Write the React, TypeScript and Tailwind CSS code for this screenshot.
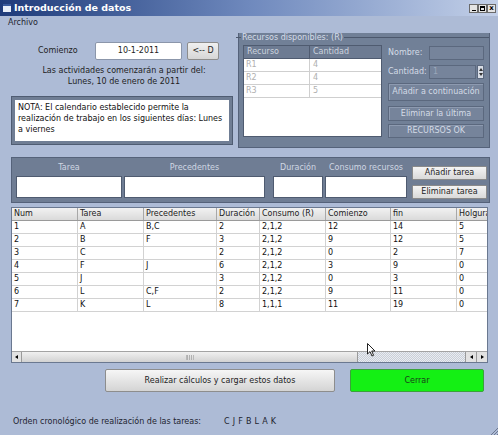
const rows = [
  ['1', 'A', 'B,C', '2', '2,1,2', '12', '14', '5'],
  ['2', 'B', 'F', '3', '2,1,2', '9', '12', '5'],
  ['3', 'C', '', '2', '2,1,2', '0', '2', '7'],
  ['4', 'F', 'J', '6', '2,1,2', '3', '9', '0'],
  ['5', 'J', '', '3', '2,1,2', '0', '3', '0'],
  ['6', 'L', 'C,F', '2', '2,1,2', '9', '11', '0'],
  ['7', 'K', 'L', '8', '1,1,1', '11', '19', '0'],
]

const headers = ['Num', 'Tarea', 'Precedentes', 'Duración', 'Consumo (R)', 'Comienzo', 'fin', 'Holgura']
const colW = ['w-[66px]', 'w-[66px]', 'w-[73px]', 'w-[43px]', 'w-[66px]', 'w-[65px]', 'w-[66px]', 'w-[40px]']

const resources = [
  ['R1', '4'],
  ['R2', '4'],
  ['R3', '5'],
]

function WinButton({ children }: { children: React.ReactNode }) {
  return (
    <div className="w-[9px] h-[9px] bg-[#e4e4e4] border border-[#6a6a6a] flex items-center justify-center text-[7px] leading-none text-black font-bold">
      {children}
    </div>
  )
}

function DarkButton({ label, className = '' }: { label: string; className?: string }) {
  return (
    <div
      className={`w-[96px] flex items-center justify-center bg-[#76849b] border border-[#5b687e] shadow-[inset_1px_1px_0_#8d9ab0] text-[#d4dbe6] ${className}`}
    >
      {label}
    </div>
  )
}

export default function App() {
  return (
    <div
      className="w-[498px] h-[435px] bg-[#adbbd6] overflow-hidden relative text-[8px] text-[#1e1e1e]"
      style={{ fontFamily: '"DejaVu Sans", Verdana, sans-serif' }}
    >
      {/* title bar */}
      <div className="h-[16px] flex items-center bg-gradient-to-r from-[#1f3b7a] via-[#6f89bd] to-[#c3d0e8]">
        <div className="ml-[3px] w-[8px] h-[8px] bg-[#e8eef8] border-t-[2px] border-[#3a5a9c]" />
        <span className="ml-[3px] text-white font-bold text-[9.5px] leading-none">Introducción de datos</span>
        <div className="ml-auto mr-[2px] flex">
          <WinButton>
            <span className="block w-[4px] h-[1px] bg-black mt-[4px]" />
          </WinButton>
          <WinButton>
            <span className="block w-[5px] h-[5px] border border-black border-t-2" />
          </WinButton>
          <WinButton>x</WinButton>
        </div>
      </div>

      {/* menu */}
      <div className="h-[14px] pl-[8px] flex items-center text-[#1e2430]">Archivo</div>

      {/* top section */}
      <div className="flex pl-[11px] pt-[3px]">
        <div className="w-[222px]">
          <div className="mt-[9px] h-[18px] flex items-center">
            <span className="ml-[27px] w-[57px]">Comienzo</span>
            <div className="w-[87px] h-[18px] bg-white border border-[#8b96aa] rounded-[2px] flex items-center justify-center">
              10-1-2011
            </div>
            <div className="ml-[5px] w-[32px] h-[18px] bg-gradient-to-b from-[#f0f0f0] to-[#d6d6d6] border border-[#8d8d8d] rounded-[2px] flex items-center justify-center">
              &lt;-- D
            </div>
          </div>
          <div className="mt-[5px] text-center leading-[11px] pl-[4px]">
            <div>Las actividades comenzarán a partir del:</div>
            <div>Lunes, 10 de enero de 2011</div>
          </div>
          <div className="mt-[9px] h-[49px] bg-[#6f7d94] border border-[#4f5c72] p-[3px]">
            <div className="h-full bg-white px-[3px] pt-[2px] leading-[11px] text-[#111]">
              NOTA: El calendario establecido permite la realización de trabajo en los siguientes días: Lunes a viernes
            </div>
          </div>
        </div>

        {/* recursos group */}
        <div className="ml-[5px] w-[252px] h-[115px] bg-[#718097] border-x border-b border-[#55627a] relative">
          <div className="absolute left-[-3px] right-0 top-[4px] h-px bg-[#4c586d]" />
          <div className="absolute left-[2px] top-0 px-[1px] text-[#d5dce8] leading-[10px] bg-[#718097]">
            Recursos disponibles: (R)
          </div>
          <div className="flex pt-[12px] pl-[4px]">
            <div className="w-[139px] h-[92px] bg-white border border-[#4f5b70]">
              <div className="flex h-[13px] bg-[#6d7b92] text-[#ccd3de] border-b border-[#4f5b70]">
                <div className="w-[66px] pl-[3px] border-r border-[#4f5b70] leading-[12px]">Recurso</div>
                <div className="flex-1 pl-[3px] leading-[12px]">Cantidad</div>
              </div>
              {resources.map((r) => (
                <div key={r[0]} className="flex h-[13px] text-[#b0b0b0] border-b border-[#cfcfcf]">
                  <div className="w-[66px] pl-[2px] border-r border-[#cfcfcf] leading-[12px]">{r[0]}</div>
                  <div className="flex-1 pl-[3px] leading-[12px]">{r[1]}</div>
                </div>
              ))}
            </div>
            <div className="ml-[6px] w-[96px] text-[#d4dbe6]">
              <div className="flex items-center h-[15px]">
                <span className="w-[41px]">Nombre:</span>
                <div className="w-[55px] h-[14px] border border-[#5b687e] bg-[#76849b]" />
              </div>
              <div className="flex items-center h-[15px] mt-[4px]">
                <span className="w-[41px]">Cantidad:</span>
                <div className="w-[47px] h-[14px] border border-[#5b687e] bg-[#76849b] pl-[3px] leading-[12px] text-[#9ba7ba]">
                  1
                </div>
                <div className="ml-[1px] w-[7px] h-[14px] bg-[#d8dde6] border border-[#5b687e] flex flex-col items-center justify-center gap-[2px]">
                  <span className="block w-0 h-0 border-l-[2px] border-r-[2px] border-b-[3px] border-l-transparent border-r-transparent border-b-[#333]" />
                  <span className="block w-0 h-0 border-l-[2px] border-r-[2px] border-t-[3px] border-l-transparent border-r-transparent border-t-[#333]" />
                </div>
              </div>
              <DarkButton label="Añadir a continuación" className="mt-[4px] h-[18px]" />
              <DarkButton label="Eliminar la última" className="mt-[5px] h-[15px]" />
              <DarkButton label="RECURSOS OK" className="mt-[3px] h-[14px]" />
            </div>
          </div>
        </div>
      </div>

      {/* task input panel */}
      <div className="ml-[11px] mt-[9px] w-[479px] h-[46px] bg-[#6f7d94] border border-[#55627a] flex pl-[4px] text-[#d0d7e3]">
        <div className="w-[106px] flex flex-col">
          <div className="h-[18px] flex items-end justify-center pb-[2px]">Tarea</div>
          <div className="h-[22px] bg-white border border-[#4f5b70]" />
        </div>
        <div className="ml-[2px] w-[141px] flex flex-col">
          <div className="h-[18px] flex items-end justify-center pb-[2px]">Precedentes</div>
          <div className="h-[22px] bg-white border border-[#4f5b70]" />
        </div>
        <div className="ml-[8px] w-[50px] flex flex-col">
          <div className="h-[18px] flex items-end justify-center pb-[2px]">Duración</div>
          <div className="h-[22px] bg-white border border-[#4f5b70]" />
        </div>
        <div className="ml-[2px] w-[82px] flex flex-col">
          <div className="h-[18px] flex items-end justify-center pb-[2px]">Consumo recursos</div>
          <div className="h-[22px] bg-white border border-[#4f5b70]" />
        </div>
        <div className="ml-[5px] w-[75px] flex flex-col pt-[8px] text-[#1e1e1e]">
          <div className="h-[14px] bg-gradient-to-b from-[#f4f4f4] to-[#d9d9d9] border border-[#8a8a8a] rounded-[1px] flex items-center justify-center">
            Añadir tarea
          </div>
          <div className="mt-[5px] h-[14px] bg-gradient-to-b from-[#f4f4f4] to-[#d9d9d9] border border-[#8a8a8a] rounded-[1px] flex items-center justify-center">
            Eliminar tarea
          </div>
        </div>
      </div>

      {/* results table */}
      <div className="ml-[11px] mt-[4px] w-[477px] h-[156px] bg-white border border-[#6a7890] flex flex-col overflow-hidden">
        <div className="flex h-[13px] bg-gradient-to-b from-[#f2f2f2] to-[#dadada] border-b border-[#9a9a9a] shrink-0">
          {headers.map((h, i) => (
            <div
              key={h}
              className={`${colW[i]} shrink-0 pl-[2px] leading-[12px] border-r border-[#a8a8a8] whitespace-nowrap overflow-hidden text-[#222]`}
            >
              {h}
            </div>
          ))}
        </div>
        {rows.map((r) => (
          <div key={r[0]} className="flex h-[13px] border-b border-[#d2d2d2] shrink-0">
            {r.map((c, i) => (
              <div
                key={i}
                className={`${colW[i]} shrink-0 pl-[2px] leading-[12px] border-r border-[#d2d2d2] text-[#111]`}
              >
                {c}
              </div>
            ))}
          </div>
        ))}
        <div className="flex-1" />
        {/* horizontal scrollbar */}
        <div className="h-[11px] flex shrink-0 border-t border-[#a3a3a3]">
          <div className="w-[10px] bg-[#e2e2e2] border-r border-[#9a9a9a] flex items-center justify-center">
            <span className="block w-0 h-0 border-t-[2px] border-b-[2px] border-r-[3px] border-t-transparent border-b-transparent border-r-black" />
          </div>
          <div className="w-[336px] bg-gradient-to-b from-[#f0f0f0] to-[#d2d2d2] border-r border-[#9a9a9a] flex items-center justify-center">
            <span className="block w-[8px] h-[5px] border-x border-[#b8b8b8] bg-[repeating-linear-gradient(90deg,#b0b0b0_0px,#b0b0b0_1px,transparent_1px,transparent_2px)]" />
          </div>
          <div className="flex-1 bg-[repeating-conic-gradient(#c9cfd8_0%_25%,#e9ecf1_0%_50%)] bg-[length:2px_2px]" />
          <div className="w-[11px] bg-[#e2e2e2] border-l border-[#9a9a9a] flex items-center justify-center">
            <span className="block w-0 h-0 border-t-[2px] border-b-[2px] border-r-[3px] border-t-transparent border-b-transparent border-r-black" />
          </div>
          <div className="w-[11px] bg-[#e2e2e2] border-l border-[#9a9a9a] flex items-center justify-center">
            <span className="block w-0 h-0 border-t-[2px] border-b-[2px] border-l-[3px] border-t-transparent border-b-transparent border-l-black" />
          </div>
        </div>
      </div>

      {/* action buttons */}
      <div className="flex mt-[6px] ml-[105px]">
        <div className="w-[230px] h-[23px] bg-gradient-to-b from-[#f6f6f6] to-[#d4d4d4] border border-[#8d8d8d] rounded-[2px] flex items-center justify-center text-[#1e1e1e]">
          Realizar cálculos y cargar estos datos
        </div>
        <div className="ml-[15px] w-[134px] h-[23px] bg-[#14f014] border border-[#3aa23a] rounded-[2px] flex items-center justify-center text-[#184018]">
          Cerrar
        </div>
      </div>

      {/* bottom line */}
      <div className="flex mt-[24px] ml-[13px] text-[#1e2430]">
        <span className="w-[211px]">Orden cronológico de realización de las tareas:</span>
        <span className="tracking-[0.3px]">C J F B L A K</span>
      </div>

      {/* resize grip */}
      <svg className="absolute right-0 bottom-0" width="8" height="8" viewBox="0 0 8 8">
        <path d="M8 1 L1 8 M8 4 L4 8 M8 7 L7 8" stroke="#6d7890" strokeWidth="1" />
      </svg>

      {/* mouse cursor */}
      <svg className="absolute left-[367px] top-[343px]" width="10" height="15" viewBox="0 0 10 15">
        <path d="M0.5 0.5 L0.5 11 L3 8.6 L5 13 L6.6 12.3 L4.7 8 L8 8 Z" fill="white" stroke="#222" strokeWidth="1" strokeLinejoin="round" />
      </svg>
    </div>
  )
}
